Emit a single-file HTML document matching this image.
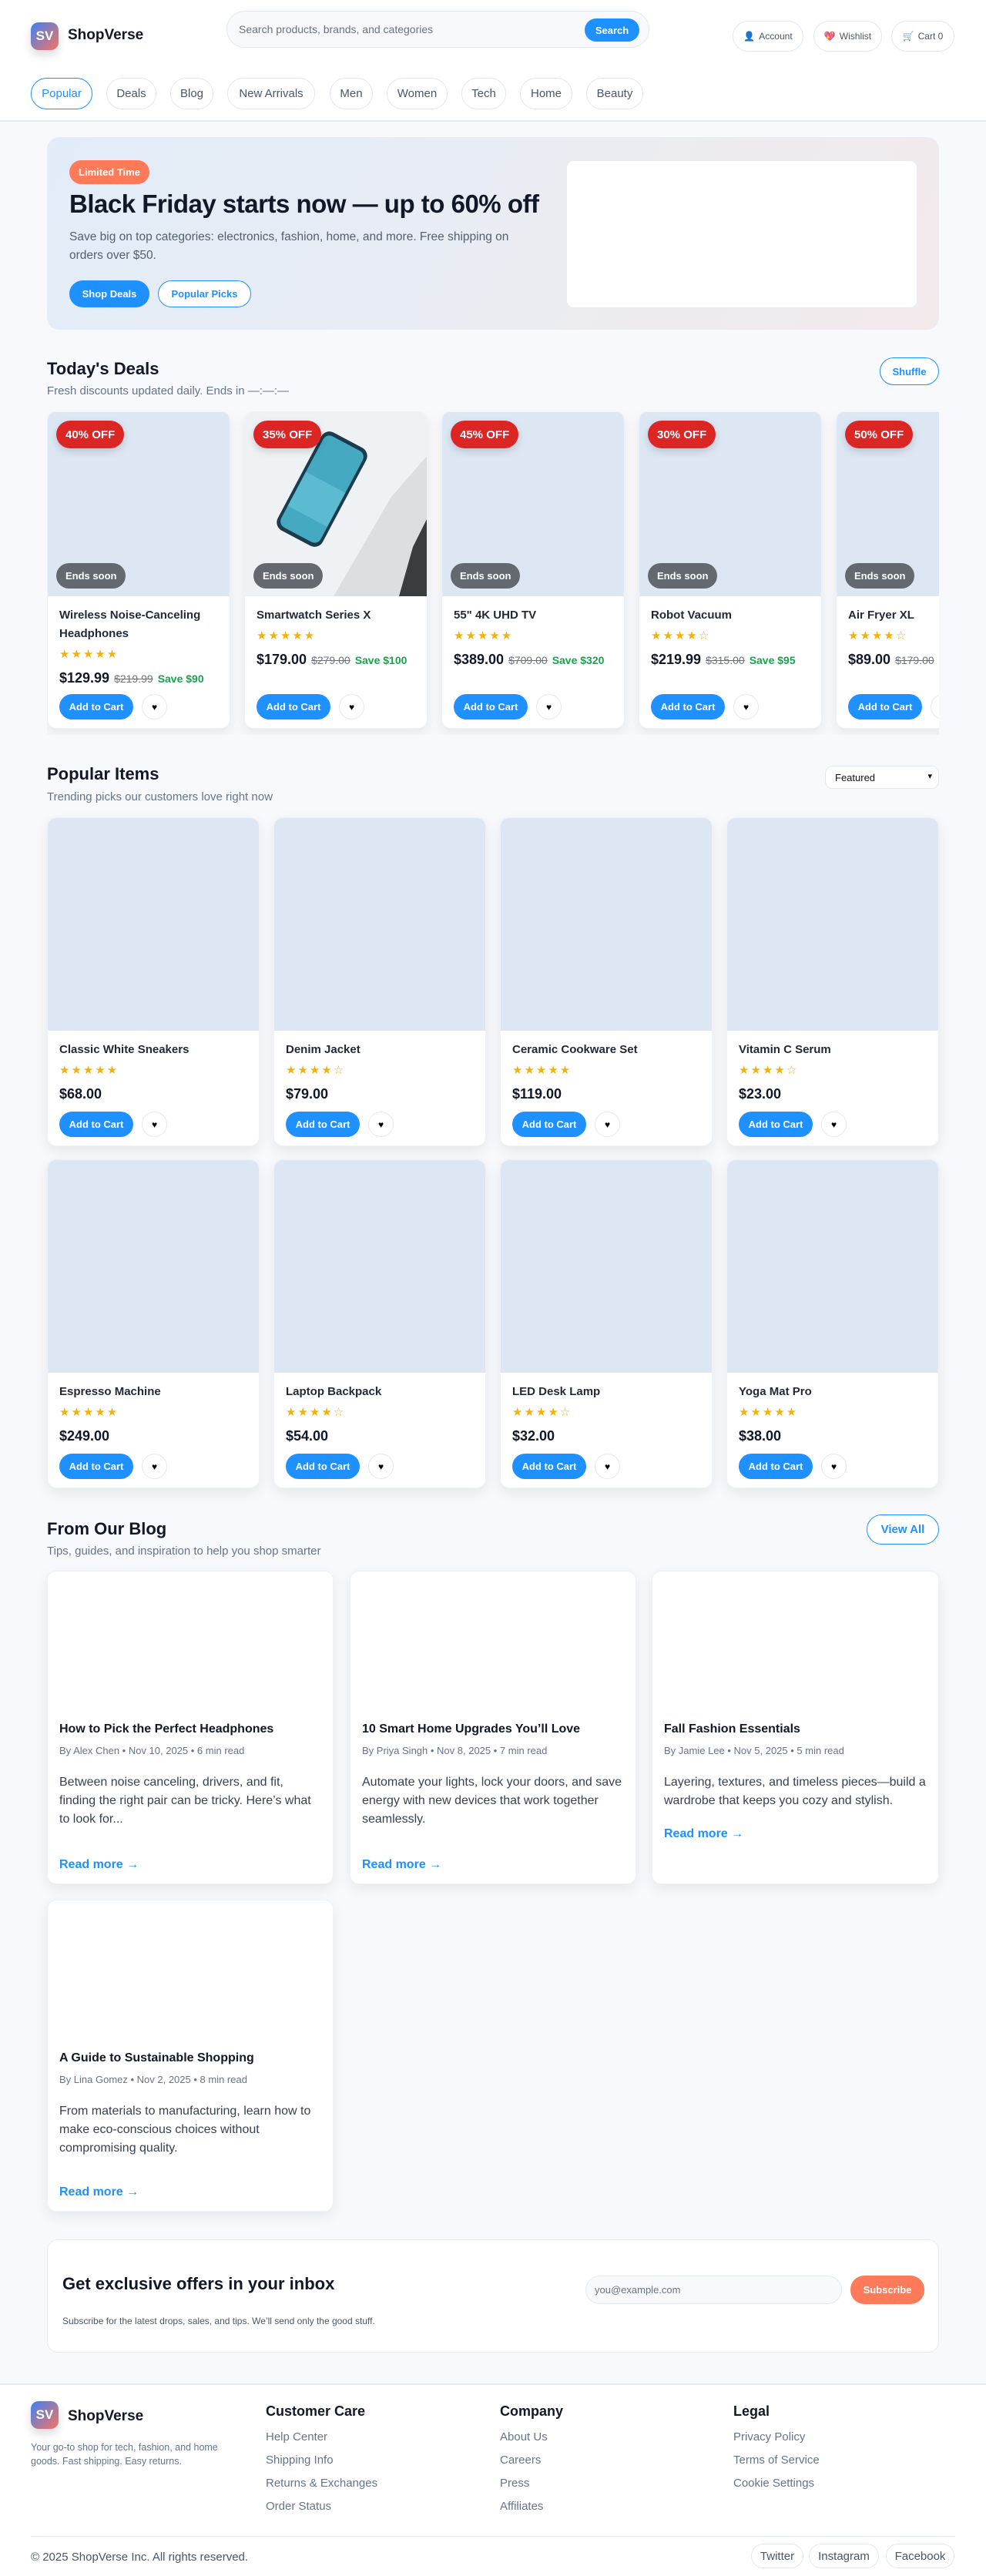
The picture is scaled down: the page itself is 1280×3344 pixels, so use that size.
<!DOCTYPE html>
<html><head><meta charset="utf-8">
<style>
*{box-sizing:border-box;margin:0;padding:0}
body{width:1280px;height:3344px;background:#f7f9fc;font-family:"Liberation Sans",Arial,sans-serif;color:#1f2937;position:relative;overflow:hidden}
.abs{position:absolute}
header{position:absolute;left:0;top:0;width:1280px;height:158px;background:#fff;border-bottom:2px solid #e6ebf2}
.logo{width:36px;height:36px;border-radius:10px;background:linear-gradient(135deg,#3b82f6,#f97360);color:#fff;font-weight:700;font-size:17px;display:flex;align-items:center;justify-content:center;box-shadow:0 6px 12px rgba(0,0,0,.15)}
.brand{font-weight:700;font-size:19px;color:#111827}
.search{left:294px;top:14px;width:549px;height:48px;border:1px solid #e3e8ef;border-radius:24px;background:#f7f9fc}
.search span{position:absolute;left:15px;top:15px;font-size:14px;color:#6b7280}
.search b{position:absolute;right:12px;top:9px;width:71px;height:30px;border-radius:15px;background:#1e90ff;color:#fff;font-size:13px;display:flex;align-items:center;justify-content:center}
.hb{top:27px;height:40px;border:1px solid #e3e8ef;border-radius:20px;background:#fff;font-size:12px;color:#4b5563;display:flex;align-items:center;justify-content:center;gap:5px}
.tab{top:101px;height:41px;border:1px solid #e3e8ef;border-radius:21px;font-size:15px;color:#4b5563;display:flex;align-items:center;justify-content:center;background:#fff}
.tab.on{border:1.5px solid #1e90ff;color:#1e90ff}
.hero{left:61px;top:178px;width:1158px;height:250px;border-radius:16px;border:1px solid #e8ecf2;background:linear-gradient(120deg,#e2ecf8 0%,#e9ecf3 50%,#f3eaeb 100%)}
.pill{border-radius:18px;display:flex;align-items:center;justify-content:center;font-weight:700}
h2{font-size:22px;font-weight:700;color:#111827}
.sub{font-size:15px;color:#64748b}
.obtn{border:1.5px solid #1e90ff;color:#1e90ff;background:#fff;border-radius:20px;display:flex;align-items:center;justify-content:center;font-weight:700}
.card{position:absolute;background:#fff;border-radius:12px;box-shadow:0 6px 16px rgba(15,23,42,.08);border:1px solid #eef1f5;overflow:hidden;display:flex;flex-direction:column}
.img{background:#dce7f3;position:relative;flex:none}
.cb{padding:13px 15px 11px;display:flex;flex-direction:column;flex:1}
.nm{font-size:15px;font-weight:700;line-height:24px;color:#1f2937}
.st{color:#f4b10c;font-size:15px;letter-spacing:2px;margin-top:5px;line-height:20px}
.pr{margin-top:9px;font-size:18px;font-weight:700;color:#111827;line-height:22px}
.pr s{font-size:14px;color:#6b7280;font-weight:400;margin-left:6px}
.pr i{font-style:normal;font-size:14px;color:#16a34a;margin-left:6px}
.act{margin-top:auto;display:flex;gap:11px;align-items:center}
.add{width:96px;height:33px;border-radius:17px;background:#1e90ff;color:#fff;font-size:13px;font-weight:700;display:flex;align-items:center;justify-content:center}
.hrt{width:33px;height:33px;border-radius:50%;border:1px solid #e3e8ef;display:flex;align-items:center;justify-content:center;font-size:12px;color:#000}
.off{position:absolute;left:11px;top:11px;height:36px;padding:0 12px;border-radius:18px;background:#dc2626;color:#fff;font-weight:700;font-size:15px;display:flex;align-items:center;box-shadow:0 4px 10px rgba(0,0,0,.15)}
.ends{position:absolute;left:11px;bottom:10px;height:33px;padding:0 12px;border-radius:17px;background:#646970;color:#fff;font-weight:700;font-size:13px;display:flex;align-items:center}
.blog .bi{height:176px;flex:none}
.blog .cb{padding:18px 15px 15px}
.bt{font-size:16px;font-weight:700;color:#111827;line-height:22px}
.bm{font-size:13px;color:#64748b;margin-top:9px}
.be{font-size:16px;color:#374151;line-height:24px;margin-top:22px}
.rm{color:#1e90ff;font-weight:700;font-size:16px;margin-top:auto}
.fh{font-size:18px;font-weight:700;color:#111827}
.fl{font-size:15px;color:#64748b;line-height:30px}
.soc{top:3302px;height:32px;border:1px solid #e3e8ef;border-radius:16px;font-size:15px;color:#4b5563;display:flex;align-items:center;justify-content:center;background:#fff}
</style></head><body>

<header>
  <div class="abs logo" style="left:40px;top:29px">SV</div>
  <div class="abs brand" style="left:88px;top:35px">ShopVerse</div>
  <div class="abs search"><span>Search products, brands, and categories</span><b>Search</b></div>
  <div class="abs hb" style="left:951px;width:92px"><span style="color:#3b5a7a">👤</span>Account</div>
  <div class="abs hb" style="left:1056px;width:89px"><span>💖</span>Wishlist</div>
  <div class="abs hb" style="left:1157px;width:82px"><span>🛒</span>Cart 0</div>
  <div class="abs tab on" style="left:40px;width:80px">Popular</div>
  <div class="abs tab" style="left:138px;width:65px">Deals</div>
  <div class="abs tab" style="left:221px;width:56px">Blog</div>
  <div class="abs tab" style="left:295px;width:114px">New Arrivals</div>
  <div class="abs tab" style="left:428px;width:56px">Men</div>
  <div class="abs tab" style="left:502px;width:79px">Women</div>
  <div class="abs tab" style="left:599px;width:58px">Tech</div>
  <div class="abs tab" style="left:675px;width:68px">Home</div>
  <div class="abs tab" style="left:761px;width:74px">Beauty</div>
</header>

<div class="abs hero">
  <div class="abs pill" style="left:28px;top:29px;width:104px;height:31px;background:#ff7a59;color:#fff;font-size:13px">Limited Time</div>
  <div class="abs" style="left:28px;top:67px;font-size:33px;font-weight:700;color:#111827;letter-spacing:-.5px;white-space:nowrap">Black Friday starts now — up to 60% off</div>
  <div class="abs" style="left:28px;top:117px;width:600px;font-size:15.5px;line-height:24px;color:#55606e">Save big on top categories: electronics, fashion, home, and more. Free shipping on orders over $50.</div>
  <div class="abs pill" style="left:28px;top:185px;width:104px;height:35px;background:#1e90ff;color:#fff;font-size:13px">Shop Deals</div>
  <div class="abs obtn" style="left:143px;top:185px;width:121px;height:35px;font-size:13px">Popular Picks</div>
  <div class="abs" style="left:673px;top:29px;width:456px;height:192px;background:#fff;border-radius:10px;border:1px solid #e8ecf2"></div>
</div>

<h2 class="abs" style="left:61px;top:466px">Today's Deals</h2>
<div class="abs sub" style="left:61px;top:499px">Fresh discounts updated daily. Ends in —:—:—</div>
<div class="abs obtn" style="left:1142px;top:464px;width:77px;height:36px;font-size:13px">Shuffle</div>

<div class="abs" style="left:61px;top:534px;width:1158px;height:420px;overflow:hidden">
 <div class="card" style="left:0;top:0;width:238px;height:412px"><div class="img" style="height:239px"><div class="off">40% OFF</div><div class="ends">Ends soon</div></div>
  <div class="cb"><div class="nm">Wireless Noise-Canceling Headphones</div><div class="st">★★★★★</div><div class="pr">$129.99<s>$219.99</s><i>Save $90</i></div><div class="act"><div class="add">Add to Cart</div><div class="hrt">♥</div></div></div></div>
 <div class="card" style="left:256px;top:0;width:238px;height:412px"><div class="img" style="height:239px;background:#eef2f4">
   <svg width="238" height="239" style="position:absolute;left:0;top:0"><polygon points="238,55 238,239 115,239 190,110" fill="#dcdfe1"/><polygon points="238,135 238,239 200,239 218,175" fill="#3a3d40"/>
   <g transform="translate(100,100) rotate(28)"><rect x="-33" y="-72" width="66" height="144" rx="12" fill="#1c3b4c"/><rect x="-29" y="-67" width="58" height="134" rx="9" fill="#45a9c2"/><rect x="-29" y="-10" width="58" height="50" fill="#6cc6da" opacity=".6"/></g></svg>
   <div class="off">35% OFF</div><div class="ends">Ends soon</div></div>
  <div class="cb"><div class="nm">Smartwatch Series X</div><div class="st">★★★★★</div><div class="pr">$179.00<s>$279.00</s><i>Save $100</i></div><div class="act"><div class="add">Add to Cart</div><div class="hrt">♥</div></div></div></div>
 <div class="card" style="left:512px;top:0;width:238px;height:412px"><div class="img" style="height:239px"><div class="off">45% OFF</div><div class="ends">Ends soon</div></div>
  <div class="cb"><div class="nm">55" 4K UHD TV</div><div class="st">★★★★★</div><div class="pr">$389.00<s>$709.00</s><i>Save $320</i></div><div class="act"><div class="add">Add to Cart</div><div class="hrt">♥</div></div></div></div>
 <div class="card" style="left:768px;top:0;width:238px;height:412px"><div class="img" style="height:239px"><div class="off">30% OFF</div><div class="ends">Ends soon</div></div>
  <div class="cb"><div class="nm">Robot Vacuum</div><div class="st">★★★★☆</div><div class="pr">$219.99<s>$315.00</s><i>Save $95</i></div><div class="act"><div class="add">Add to Cart</div><div class="hrt">♥</div></div></div></div>
 <div class="card" style="left:1024px;top:0;width:238px;height:412px"><div class="img" style="height:239px"><div class="off">50% OFF</div><div class="ends">Ends soon</div></div>
  <div class="cb"><div class="nm">Air Fryer XL</div><div class="st">★★★★☆</div><div class="pr">$89.00<s>$179.00</s><i>Save $90</i></div><div class="act"><div class="add">Add to Cart</div><div class="hrt">♥</div></div></div></div>
</div>

<h2 class="abs" style="left:61px;top:992px">Popular Items</h2>
<div class="abs sub" style="left:61px;top:1026px">Trending picks our customers love right now</div>
<div class="abs" style="left:1071px;top:994px;width:148px;height:30px;border:1px solid #e3e8ef;border-radius:10px;background:#fff;font-size:13px;color:#111;padding:7px 12px">Featured<span style="position:absolute;right:8px;top:6px;font-size:11px">▾</span></div>

<div class="card" style="left:61px;top:1061px;width:276px;height:427px"><div class="img" style="height:276px"></div><div class="cb"><div class="nm">Classic White Sneakers</div><div class="st">★★★★★</div><div class="pr">$68.00</div><div class="act"><div class="add">Add to Cart</div><div class="hrt">♥</div></div></div></div>
<div class="card" style="left:355px;top:1061px;width:276px;height:427px"><div class="img" style="height:276px"></div><div class="cb"><div class="nm">Denim Jacket</div><div class="st">★★★★☆</div><div class="pr">$79.00</div><div class="act"><div class="add">Add to Cart</div><div class="hrt">♥</div></div></div></div>
<div class="card" style="left:649px;top:1061px;width:276px;height:427px"><div class="img" style="height:276px"></div><div class="cb"><div class="nm">Ceramic Cookware Set</div><div class="st">★★★★★</div><div class="pr">$119.00</div><div class="act"><div class="add">Add to Cart</div><div class="hrt">♥</div></div></div></div>
<div class="card" style="left:943px;top:1061px;width:276px;height:427px"><div class="img" style="height:276px"></div><div class="cb"><div class="nm">Vitamin C Serum</div><div class="st">★★★★☆</div><div class="pr">$23.00</div><div class="act"><div class="add">Add to Cart</div><div class="hrt">♥</div></div></div></div>
<div class="card" style="left:61px;top:1505px;width:276px;height:427px"><div class="img" style="height:276px"></div><div class="cb"><div class="nm">Espresso Machine</div><div class="st">★★★★★</div><div class="pr">$249.00</div><div class="act"><div class="add">Add to Cart</div><div class="hrt">♥</div></div></div></div>
<div class="card" style="left:355px;top:1505px;width:276px;height:427px"><div class="img" style="height:276px"></div><div class="cb"><div class="nm">Laptop Backpack</div><div class="st">★★★★☆</div><div class="pr">$54.00</div><div class="act"><div class="add">Add to Cart</div><div class="hrt">♥</div></div></div></div>
<div class="card" style="left:649px;top:1505px;width:276px;height:427px"><div class="img" style="height:276px"></div><div class="cb"><div class="nm">LED Desk Lamp</div><div class="st">★★★★☆</div><div class="pr">$32.00</div><div class="act"><div class="add">Add to Cart</div><div class="hrt">♥</div></div></div></div>
<div class="card" style="left:943px;top:1505px;width:276px;height:427px"><div class="img" style="height:276px"></div><div class="cb"><div class="nm">Yoga Mat Pro</div><div class="st">★★★★★</div><div class="pr">$38.00</div><div class="act"><div class="add">Add to Cart</div><div class="hrt">♥</div></div></div></div>

<h2 class="abs" style="left:61px;top:1972px">From Our Blog</h2>
<div class="abs sub" style="left:61px;top:2005px">Tips, guides, and inspiration to help you shop smarter</div>
<div class="abs obtn" style="left:1125px;top:1966px;width:94px;height:39px;font-size:15px">View All</div>

<div class="card blog" style="left:61px;top:2039px;width:372px;height:407px"><div class="bi"></div><div class="cb"><div class="bt">How to Pick the Perfect Headphones</div><div class="bm">By Alex Chen • Nov 10, 2025 • 6 min read</div><div class="be">Between noise canceling, drivers, and fit, finding the right pair can be tricky. Here’s what to look for...</div><div class="rm">Read more →</div></div></div>
<div class="card blog" style="left:454px;top:2039px;width:372px;height:407px"><div class="bi"></div><div class="cb"><div class="bt">10 Smart Home Upgrades You’ll Love</div><div class="bm">By Priya Singh • Nov 8, 2025 • 7 min read</div><div class="be">Automate your lights, lock your doors, and save energy with new devices that work together seamlessly.</div><div class="rm">Read more →</div></div></div>
<div class="card blog" style="left:846px;top:2039px;width:373px;height:407px"><div class="bi"></div><div class="cb"><div class="bt">Fall Fashion Essentials</div><div class="bm">By Jamie Lee • Nov 5, 2025 • 5 min read</div><div class="be">Layering, textures, and timeless pieces—build a wardrobe that keeps you cozy and stylish.</div><div class="rm" style="margin-top:22px">Read more →</div></div></div>
<div class="card blog" style="left:61px;top:2466px;width:372px;height:405px"><div class="bi"></div><div class="cb"><div class="bt">A Guide to Sustainable Shopping</div><div class="bm">By Lina Gomez • Nov 2, 2025 • 8 min read</div><div class="be">From materials to manufacturing, learn how to make eco-conscious choices without compromising quality.</div><div class="rm">Read more →</div></div></div>

<div class="abs" style="left:61px;top:2907px;width:1158px;height:147px;background:#fff;border:1px solid #e6ebf2;border-radius:14px">
  <div class="abs" style="left:19px;top:44px;font-size:22px;font-weight:700;color:#111827">Get exclusive offers in your inbox</div>
  <div class="abs" style="left:19px;top:98px;font-size:12px;color:#4b5563">Subscribe for the latest drops, sales, and tips. We’ll send only the good stuff.</div>
  <div class="abs" style="left:698px;top:46px;width:333px;height:37px;border:1px solid #e3e8ef;border-radius:19px;background:#f7f9fc;font-size:13px;color:#6b7280;padding:10px 11px">you@example.com</div>
  <div class="abs pill" style="left:1042px;top:46px;width:96px;height:37px;background:#ff7a59;color:#fff;font-size:13px">Subscribe</div>
</div>

<div class="abs" style="left:0;top:3094px;width:1280px;height:250px;background:#fff;border-top:2px solid #e6ebf2">
  <div class="abs logo" style="left:40px;top:21px">SV</div>
  <div class="abs brand" style="left:88px;top:30px">ShopVerse</div>
  <div class="abs" style="left:40px;top:72px;width:260px;font-size:12.5px;line-height:18px;color:#64748b">Your go-to shop for tech, fashion, and home goods. Fast shipping. Easy returns.</div>
  <div class="abs" style="left:345px;top:24px"><div class="fh">Customer Care</div><div class="fl" style="margin-top:8px">Help Center<br>Shipping Info<br>Returns &amp; Exchanges<br>Order Status</div></div>
  <div class="abs" style="left:649px;top:24px"><div class="fh">Company</div><div class="fl" style="margin-top:8px">About Us<br>Careers<br>Press<br>Affiliates</div></div>
  <div class="abs" style="left:952px;top:24px"><div class="fh">Legal</div><div class="fl" style="margin-top:8px">Privacy Policy<br>Terms of Service<br>Cookie Settings</div></div>
  <div class="abs" style="left:40px;top:196px;width:1200px;height:1px;background:#e6ebf2"></div>
  <div class="abs" style="left:40px;top:215px;font-size:15px;color:#4b5563">© 2025 ShopVerse Inc. All rights reserved.</div>
</div>
<div class="abs soc" style="left:975px;width:68px">Twitter</div>
<div class="abs soc" style="left:1050px;width:91px">Instagram</div>
<div class="abs soc" style="left:1150px;width:89px">Facebook</div>
</body></html>
